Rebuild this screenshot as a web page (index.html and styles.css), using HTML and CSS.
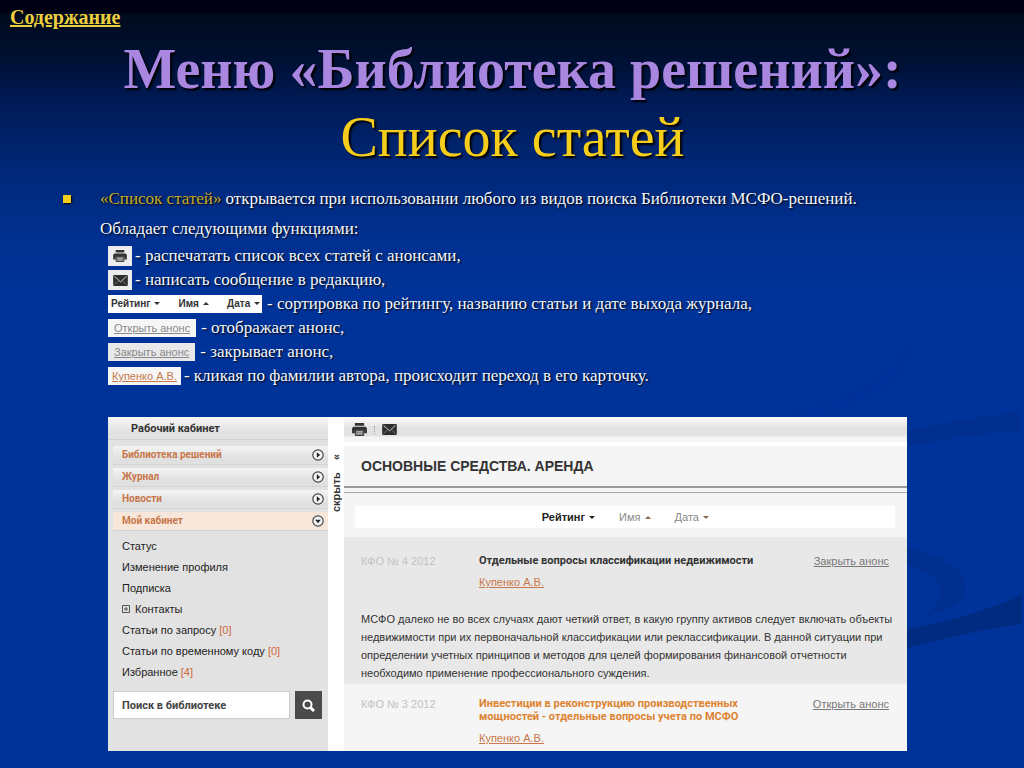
FILE: index.html
```html
<!DOCTYPE html>
<html lang="ru">
<head>
<meta charset="utf-8">
<title>Меню «Библиотека решений»: Список статей</title>
<link rel="stylesheet" href="styles.css">
</head>
<body>
<svg width="0" height="0" class="defs" aria-hidden="true">
  <symbol id="printer" viewBox="0 0 16 14">
    <path fill="#333" d="M3 0h10v3H3zM1.500 4h13L16 5.500V11h-3V8H3v3H0V5.500z"/>
    <path fill="#777" stroke="#333" d="M3.500 7.500h9v6h-9z"/>
    <path stroke="#bbb" d="M5 9.500h6M5 11.500h6"/>
  </symbol>
  <symbol id="mail" viewBox="0 0 16 12">
    <rect width="16" height="12" rx="1" fill="#2e2e2e"/>
    <path fill="none" stroke="#ddd" d="M1.500 1.500 8 7.500l6.500-6"/>
    <path fill="none" stroke="#777" d="M1.500 10.500l4-4M14.500 10.500l-4-4"/>
  </symbol>
  <symbol id="go" viewBox="0 0 12 12">
    <circle cx="6" cy="6" r="5.200" fill="#f4f4f4" stroke="#444" stroke-width="1.200"/>
    <path fill="#222" d="M4.800 3.200 8.200 6l-3.400 2.800z"/>
  </symbol>
</svg>
<main class="slide">
  <svg class="swirl" viewBox="0 0 260 440" aria-hidden="true">
    <path fill="#00309a" d="M10 89C70 72 134 56 147 0C152 50 112 74 60 89z"/>
    <path fill="#002f90" d="M130 105Q190 92 256 84V102Q190 108 130 121z"/>
    <path fill="#002f90" d="M130 218C176 224 202 240 202 258C202 274 182 284 157 289C170 281 178 270 175 258C172 248 156 238 130 231z"/>
    <path fill="#002b80" d="M130 303Q200 293 258 267V296Q200 304 130 324z"/>
  </svg>
  <a class="contents" href="#contents">Содержание</a>
  <h1 class="title">Меню «Библиотека решений»:<span class="subtitle">Список статей</span></h1>
  <section class="intro">
    <p class="lead"><em>«Список статей»</em> открывается при использовании любого из видов поиска Библиотеки МСФО-решений.</p>
    <p class="functions">Обладает следующими функциями:</p>
    <ul class="legend">
      <li><button class="chip icon" aria-label="Печать"><svg width="14" height="12"><use href="#printer"/></svg></button><span>- распечатать список всех статей с анонсами,</span></li>
      <li><button class="chip icon" aria-label="Письмо"><svg width="15" height="11"><use href="#mail"/></svg></button><span>- написать сообщение в редакцию,</span></li>
      <li><span class="chip order"><button>Рейтинг <i class="down"></i></button><button>Имя <i class="up"></i></button><button>Дата <i class="down"></i></button></span><span class="wide">- сортировка по рейтингу, названию статьи и дате выхода журнала,</span></li>
      <li><a class="chip" href="#open">Открыть анонс</a><span class="wide">- отображает анонс,</span></li>
      <li><a class="chip shaded" href="#close">Закрыть анонс</a><span class="wide">- закрывает анонс,</span></li>
      <li><a class="chip author" href="#author">Купенко А.В.</a><span>- кликая по фамилии автора, происходит переход в его карточку.</span></li>
    </ul>
  </section>
  <section class="panel">
    <aside class="sidebar">
      <h2 class="cabinet">Рабочий кабинет</h2>
      <nav class="menu">
        <a href="#library">Библиотека решений<svg width="12" height="12"><use href="#go"/></svg></a>
        <a href="#journal">Журнал<svg width="12" height="12"><use href="#go"/></svg></a>
        <a href="#news">Новости<svg width="12" height="12"><use href="#go"/></svg></a>
        <a class="current" href="#my">Мой кабинет<svg width="12" height="12"><use href="#go"/></svg></a>
      </nav>
      <ul class="links">
        <li><a href="#status">Статус</a></li>
        <li><a href="#profile">Изменение профиля</a></li>
        <li><a href="#subscription">Подписка</a></li>
        <li><svg class="plus" width="8" height="8" viewBox="0 0 8 8"><path fill="none" stroke="#555" d="M.5.5h7v7h-7zM2 4h4M4 2v4"/></svg><a href="#contacts">Контакты</a></li>
        <li><a href="#requests">Статьи по запросу <b>[0]</b></a></li>
        <li><a href="#code">Статьи по временному коду <b>[0]</b></a></li>
        <li><a href="#favourites">Избранное <b>[4]</b></a></li>
      </ul>
      <form class="search">
        <input type="text" aria-label="Поиск в библиотеке" value="Поиск в библиотеке">
        <button type="button" aria-label="Найти"><svg width="13" height="13" viewBox="0 0 13 13"><circle cx="5.500" cy="5.500" r="4" fill="none" stroke="#fff" stroke-width="2"/><path stroke="#fff" stroke-width="3" d="m8.500 8.500 3.500 3.500"/></svg></button>
      </form>
    </aside>
    <button class="hide"><span>скрыть</span><span class="arrows">«</span></button>
    <div class="content">
      <div class="tools">
        <button aria-label="Печать"><svg width="15" height="13"><use href="#printer"/></svg></button>
        <span class="dots"></span>
        <button aria-label="Письмо"><svg width="15" height="11"><use href="#mail"/></svg></button>
      </div>
      <h2 class="heading">ОСНОВНЫЕ СРЕДСТВА. АРЕНДА</h2>
      <div class="sorting">
        <button class="active">Рейтинг <i class="down"></i></button>
        <button>Имя <i class="up"></i></button>
        <button>Дата <i class="down"></i></button>
      </div>
      <article class="article opened">
        <span class="issue">КФО № 4 2012</span>
        <div class="about"><h3>Отдельные вопросы классификации недвижимости</h3><a class="author" href="#author">Купенко А.В.</a></div>
        <a class="toggle" href="#close">Закрыть анонс</a>
        <p class="summary">МСФО далеко не во всех случаях дают четкий ответ, в какую группу активов следует включать объекты недвижимости при их первоначальной классификации или реклассификации. В данной ситуации при определении учетных принципов и методов для целей формирования финансовой отчетности необходимо применение профессионального суждения.</p>
      </article>
      <article class="article">
        <span class="issue">КФО № 3 2012</span>
        <div class="about"><h3 class="hot">Инвестиции в реконструкцию производственных мощностей - отдельные вопросы учета по МСФО</h3><a class="author" href="#author">Купенко А.В.</a></div>
        <a class="toggle" href="#open">Открыть анонс</a>
      </article>
    </div>
  </section>
</main>
</body>
</html>
```
FILE: styles.css
```css
* { box-sizing: border-box; margin: 0; padding: 0; }
body { font-family: "Liberation Serif", serif; background: #003399; }
button { border: 0; background: none; font: inherit; color: inherit; cursor: pointer; }
ul { list-style: none; }
svg { display: block; flex: none; }
.defs { position: absolute; }

.slide {
  position: relative;
  min-height: 100vh;
  padding: 6px 117px 16px 108px;
  background: linear-gradient(#000013 0, #000013 12px, #000a1c 14px, #001033 60px, #001a55 100px, #002878 170px, #003090 240px, #003399 300px);
}
.swirl { position: absolute; right: 0; bottom: 0; width: 260px; height: 440px; }
.contents {
  position: relative;
  display: block;
  width: max-content;
  margin-left: -98px;
  font-size: 20px;
  line-height: 22px;
  font-weight: bold;
  color: #eccf3c;
}
.title {
  position: relative;
  margin: 7px -10px 0 0;
  font-size: 56px;
  line-height: 68px;
  text-align: center;
  white-space: nowrap;
  color: #a987e0;
  text-shadow: 2px 2px 2px #000;
}
.subtitle { display: block; font-weight: normal; color: #f7cd1c; }

.intro {
  position: relative;
  font-size: 17px;
  color: #f4f7ff;
  text-shadow: 1px 1px 2px #000;
}
.lead {
  display: flex;
  align-items: center;
  gap: 4px;
  margin: 16px 0 0 -45px;
  line-height: 24px;
  white-space: nowrap;
}
.lead::before {
  content: "";
  width: 8px;
  height: 8px;
  margin-right: 25px;
  background: #f7cd1c;
  box-shadow: 1px 1px 2px #000;
}
.lead em { font-style: normal; color: #c9ab25; }
.functions { margin: 6px 0 3px -8px; line-height: 24px; }
.legend li { display: flex; align-items: center; gap: 3px; height: 24px; }
.legend .wide { margin-left: 2px; }
.chip {
  display: flex;
  align-items: center;
  justify-content: center;
  height: 18px;
  padding: 0 6px;
  background: #f6f6f6;
  font: 11px/18px "Liberation Sans", sans-serif;
  color: #888;
  text-shadow: none;
}
.chip.icon { width: 24px; height: 20px; background: #ececee; }
.chip.order {
  width: 154px;
  justify-content: space-between;
  padding: 0 2px 0 3px;
  background: #fff;
  color: #333;
  font-size: 10px;
  font-weight: bold;
}
.chip.shaded { background: #e8e8ea; }
.chip.author { padding: 0 4px; }
.author, .chip.author { color: #c8774a; }
.up, .down {
  display: inline-block;
  margin-left: 1px;
  vertical-align: 2px;
  border: 3px solid transparent;
}
.down { border-top-color: currentColor; border-bottom: 0; }
.up { border-bottom-color: currentColor; border-top: 0; }

.panel {
  position: relative;
  display: flex;
  margin-top: 29px;
  background: #fff;
  font: 11px/14px "Liberation Sans", sans-serif;
  color: #333;
}
.sidebar { flex: 0 0 220px; padding-bottom: 32px; background: #e2e2e2; }
.cabinet {
  height: 23px;
  padding-left: 23px;
  border-bottom: 1px solid #d2d2d2;
  background: linear-gradient(#f6f6f6, #e2e2e2 70%);
  font: bold 11px/23px Roboto, sans-serif;
}
.menu { display: grid; gap: 3px; padding: 6px 0 0 5px; }
.menu a {
  display: flex;
  align-items: center;
  justify-content: space-between;
  height: 19px;
  padding: 0 4px 0 9px;
  border-bottom: 1px solid #d4d4d4;
  background: linear-gradient(#f4f4f4, #e0e0e0 70%);
  font: bold 10px/14px Roboto, sans-serif;
  color: #c8774a;
  text-decoration: none;
}
.menu .current { background: #f7e6da; }
.current svg { transform: rotate(90deg); }
.links { padding: 4px 0 9px 14px; }
.links li { display: flex; align-items: center; gap: 5px; height: 21px; }
.links a { color: #222; text-decoration: none; }
.links b { font-weight: normal; color: #d0693a; }
.search { display: flex; gap: 5px; padding: 0 6px 0 5px; }
.search input {
  flex: 1;
  min-width: 0;
  height: 28px;
  padding: 0 8px;
  border: 1px solid #ccc;
  background: #fff;
  font: bold 11px Roboto, sans-serif;
  color: #444;
}
.search button {
  display: grid;
  place-items: center;
  width: 27px;
  height: 28px;
  background: #4a4a4a;
}
.hide {
  display: flex;
  align-items: center;
  gap: 12px;
  align-self: flex-start;
  width: 16px;
  height: 95px;
  writing-mode: vertical-rl;
  transform: rotate(180deg);
  font-weight: bold;
}

.content { flex: 1; min-width: 0; background: #f5f5f5; }
.tools {
  display: flex;
  align-items: center;
  gap: 7px;
  height: 29px;
  padding: 0 8px;
  border-bottom: 4px solid #fff;
  background: linear-gradient(#fcfcfc, #e2e2e2 45%, #e2e2e2 75%, #f4f4f4 80%);
}
.dots { height: 8px; border-left: 1px dotted #999; }
.heading {
  height: 47px;
  padding-left: 17px;
  border-bottom: 1px solid #aaa;
  font-size: 14px;
  line-height: 40px;
  background: linear-gradient(#999, #999) 0 40px / 100% 2px no-repeat;
}
.sorting {
  display: flex;
  align-items: center;
  justify-content: flex-end;
  gap: 24px;
  height: 22px;
  margin: 13px 12px 9px 11px;
  padding-right: 186px;
  background: #fff;
  color: #888;
}
.sorting .active { font-weight: bold; color: #222; }
.sorting i { color: #8a6a50; }
.sorting .active i { color: #222; }
.article {
  display: grid;
  grid-template-columns: 118px 1fr auto;
  align-items: start;
  padding: 13px 18px 5px 17px;
}
.opened { padding: 17px 18px 2px 17px; background: #e8e8e8; }
.issue { color: #c2c2c2; }
.article h3 { margin-bottom: 8px; font: bold 11px/13px Roboto, sans-serif; }
.article .hot { max-width: 270px; color: #dd8432; }
.toggle { color: #777; }
.summary { grid-column: 1 / -1; margin: 21px -14px 0 0; line-height: 18px; }
```
